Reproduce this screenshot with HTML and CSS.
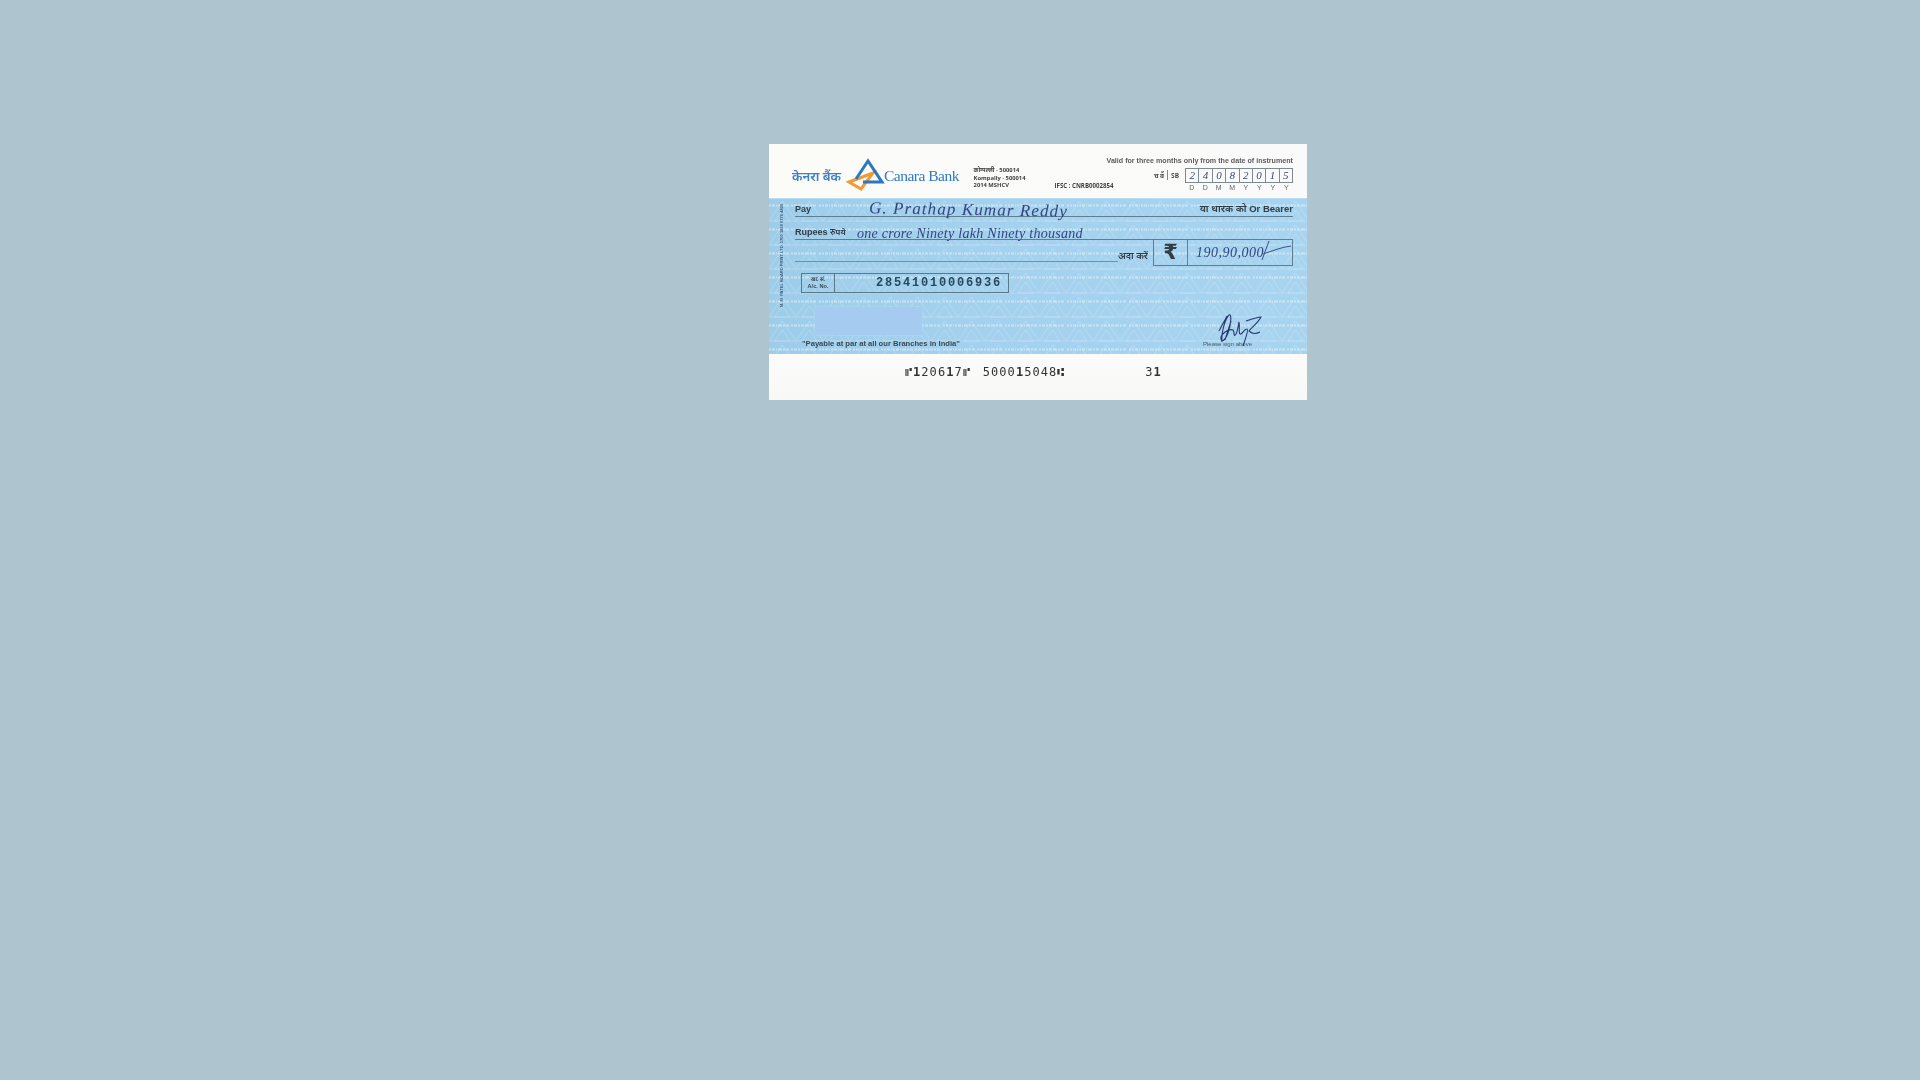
FILE: index.html
```html
<!DOCTYPE html>
<html lang="en">
<head>
<meta charset="utf-8">
<title>Cheque</title>
<link rel="stylesheet" href="styles.css">
</head>
<body>
<main class="cheque">
  <header class="head">
    <div class="brand">
      <span class="brand-hi">केनरा बैंक</span>
      <svg class="logo" viewBox="0 0 40 34" width="40" height="34" aria-hidden="true">
        <path d="M4 24 L28 15 L16 31 Z" fill="none" stroke="#f09a38" stroke-width="3" stroke-linejoin="miter"/>
        <path d="M11 21 L23 3 L37 24 L18 24" fill="none" stroke="#2b78be" stroke-width="3" stroke-linejoin="miter"/>
      </svg>
      <span class="brand-en">Canara Bank</span>
    </div>
    <div class="branch">
      <span>कोम्पल्ली - 500014</span>
      <span>Kompally - 500014</span>
      <span>2014 MSHCV</span>
    </div>
    <div class="ifsc">IFSC : CNRB0002854</div>
    <div class="validity">
      <p class="valid">Valid for three months only from the date of instrument</p>
      <div class="date-row">
        <span class="sb">च बैं <i></i> SB</span>
        <div class="date-col">
          <div class="date-boxes">
            <span>2</span><span>4</span><span>0</span><span>8</span><span>2</span><span>0</span><span>1</span><span>5</span>
          </div>
          <div class="date-labels">
            <span>D</span><span>D</span><span>M</span><span>M</span><span>Y</span><span>Y</span><span>Y</span><span>Y</span>
          </div>
        </div>
      </div>
    </div>
  </header>

  <section class="body">
    <svg class="security" width="538" height="156" aria-hidden="true">
      <defs>
        <pattern id="tri" width="27" height="24" patternUnits="userSpaceOnUse">
          <path d="M0 22 L13.5 2 L27 22 Z M6 22 L13.5 11 L21 22 Z" fill="none" stroke="#ffffff" stroke-opacity=".18" stroke-width="1"/>
        </pattern>
        <pattern id="micro" width="62" height="24" y="5" patternUnits="userSpaceOnUse">
          <path d="M0 1.5 H62" stroke="#ffffff" stroke-opacity=".4" stroke-width="2" stroke-dasharray="2 1 3 1 1 1 4 1 2 1 3 2 2 1 3 1 2 1 3 1 4 1 2 1 3 3 2 1"/>
        </pattern>
      </defs>
      <rect width="538" height="156" fill="url(#tri)"/>
      <rect width="538" height="156" fill="url(#micro)"/>
    </svg>
    <p class="side-print">M. M. PATEL BOARD PRINT LTD. 1700 1850 0776 4820</p>

    <div class="line-row pay-row">
      <span class="label">Pay</span>
      <span class="bearer"><span class="hi">या धारक को</span> Or Bearer</span>
      <span class="hand hand-payee">G. Prathap Kumar Reddy</span>
    </div>
    <div class="line-row rupees-row">
      <span class="label">Rupees <span class="hi">रुपये</span></span>
      <span class="hand hand-words">one crore Ninety lakh Ninety thousand</span>
    </div>
    <div class="amount-row">
      <div class="blank-line"></div>
      <span class="pay-hi">अदा करें</span>
      <div class="amount-box">
        <span class="rupee">₹</span>
        <span class="amount">
          <span class="hand hand-amount">190,90,000</span>
          <svg class="dash" width="32" height="24" viewBox="0 0 32 24" aria-hidden="true">
            <path d="M2 20 L9 1 M3 14 C12 11 22 7 31 6" fill="none" stroke="#2c3f7c" stroke-width=".9"/>
          </svg>
        </span>
      </div>
    </div>
    <div class="account">
      <div class="ac-label"><span>खा. सं.</span><span>A/c. No.</span></div>
      <div class="ac-number">28541010006936</div>
    </div>
    <div class="stamp"></div>
    <div class="foot-row">
      <span class="par">"Payable at par at all our Branches in India"</span>
      <span class="sign">Please sign above</span>
      <svg class="signature" width="46" height="34" viewBox="0 0 46 34" aria-hidden="true">
        <path d="M6 29 C5 20 9 6 13 2 C16 0 15 12 12 20 C10 26 6 30 5 26 C4 22 12 15 17 17 C19 19 17 25 20 21 C22 17 22 13 23 9 C24 14 22 22 25 21 C27 20 28 16 31 16 C33 17 28 30 27 33 M30 8 C36 6 42 4 45 4 C42 10 36 14 33 18 C36 21 40 21 44 19 M3 18 C8 8 10 6 11 3 M9 27 C11 20 14 12 15 8" fill="none" stroke="#28396f" stroke-width="1.1"/>
      </svg>
    </div>
  </section>

  <footer class="micr">
    <span class="m1">⑈<b>1</b>206<b>1</b>7⑈</span>
    <span class="m2">5000<b>1</b>5048⑆</span>
    <span class="m3">3<b>1</b></span>
  </footer>
</main>
</body>
</html>
```
FILE: styles.css
```css
* { box-sizing: border-box; }
html, body { margin: 0; height: 100%; }
body {
  background: #aec5cf;
  font-family: "Liberation Sans", "Noto Sans", sans-serif;
  overflow: hidden;
}
p { margin: 0; }
.hi { font-family: "Noto Sans", "Noto Sans Devanagari", "Lohit Devanagari", sans-serif; }

.cheque {
  width: 538px;
  height: 256px;
  margin: 144px 0 0 769px;
  display: flex;
  flex-direction: column;
  background: #fbfbf9;
  filter: blur(0.55px);
}

/* header */
.head {
  height: 54px;
  position: relative;
  display: flex;
  align-items: flex-start;
  padding: 15px 14px 0 23px;
  background: linear-gradient(90deg, #fbfbf8, #fafafa);
}
.brand { display: flex; align-items: center; width: 184px; margin-top: 1px; }
.brand-hi {
  width: 53px;
  font: 600 13px "Noto Sans", "Noto Sans Devanagari", sans-serif;
  color: #3c82c6;
  white-space: nowrap;
}
.logo { flex: none; margin-top: -2px; }
.brand-en {
  margin-left: -1px;
  font: 400 15.5px "Liberation Serif", serif;
  letter-spacing: -.5px;
  color: #2f7cc0;
  white-space: nowrap;
}
.branch {
  width: 82px;
  margin-top: 8px;
  display: flex;
  flex-direction: column;
  font: 700 5.8px/7.5px "Open Sans", "Noto Sans", sans-serif;
  color: #3f3f3f;
  white-space: nowrap;
}
.ifsc {
  width: 52px;
  margin-top: 23px;
  font: 700 6.1px/8px "Open Sans", "Noto Sans", sans-serif;
  color: #3f3f3f;
  white-space: nowrap;
}
.validity { flex: 1; margin-top: -2px; display: flex; flex-direction: column; align-items: flex-end; }
.valid { font: 700 7.13px/9px "Liberation Sans", sans-serif; color: #5c5c5c; white-space: nowrap; }
.date-row { display: flex; align-items: flex-start; margin-top: 2px; }
.sb {
  display: flex; align-items: center; gap: 3px;
  margin: 2px 6px 0 0;
  font: 700 6.5px/9px "Noto Sans", sans-serif;
  color: #4a4a4a;
}
.sb i { width: 1px; height: 10px; background: #888; }
.date-col { width: 108px; }
.date-boxes {
  height: 15px;
  display: grid;
  grid-template-columns: repeat(8, 1fr);
  border: 1px solid #7d8a90;
  border-left: 0;
}
.date-boxes span {
  border-left: 1px solid #7d8a90;
  text-align: center;
  font: italic 400 11px/13px "Liberation Serif", serif;
  color: #34487e;
}
.date-labels {
  display: grid;
  grid-template-columns: repeat(8, 1fr);
  font: 400 7px/9px "Liberation Sans", sans-serif;
  color: #666;
  text-align: center;
}

/* blue body */
.body {
  height: 156px;
  position: relative;
  isolation: isolate;
  padding: 0 14px 0 26px;
  background: linear-gradient(90deg, #9ecdea 0%, #a4d1ee 45%, #a8d4f0 100%);
  border-top: 1px solid #b8dcf2;
}
.security { position: absolute; left: 0; top: 0; z-index: -1; }
.side-print {
  position: absolute;
  left: 10px;
  top: 6px;
  writing-mode: vertical-rl;
  transform: rotate(180deg);
  height: 102px;
  font: 700 4px/5px "Liberation Sans", sans-serif;
  letter-spacing: .02px;
  color: #3f5a6e;
  white-space: nowrap;
}
.line-row {
  position: relative;
  display: flex;
  align-items: flex-end;
  justify-content: space-between;
  border-bottom: 1px solid #5c7f92;
}
.pay-row { height: 18px; }
.rupees-row { height: 23px; }
.label, .bearer {
  font: 700 9px/12px "Liberation Sans", sans-serif;
  color: #2f3d48;
  white-space: nowrap;
  padding-bottom: 1px;
}
.bearer { font-size: 9.5px; }
.bearer .hi { font-size: 10px; font-weight: 600; }
.label .hi { font-size: 8.5px; font-weight: 600; }
.hand {
  font-family: "Liberation Serif", serif;
  font-style: italic;
  color: #33467f;
  white-space: nowrap;
}
.hand-payee {
  position: absolute;
  left: 74px;
  bottom: -5px;
  font-size: 17px;
  line-height: 22px;
  letter-spacing: 1.1px;
  transform: rotate(1deg);
}
.hand-words {
  position: absolute;
  left: 62px;
  bottom: -4px;
  font-size: 14.1px;
  line-height: 20px;
  letter-spacing: .24px;
}
.amount-row { display: flex; align-items: flex-start; height: 26px; }
.blank-line {
  width: 323px;
  height: 22px;
  border-bottom: 1px solid #6f93a6;
}
.pay-hi {
  width: 35px;
  margin-top: 10px;
  font: 600 9.5px/12px "Noto Sans", "Noto Sans Devanagari", sans-serif;
  color: #2f3d48;
  white-space: nowrap;
}
.amount-box {
  flex: 1;
  height: 26px;
  display: flex;
  border: 1px solid #5c7f92;
  border-top: 0;
}
.rupee {
  width: 34px;
  border-right: 1px solid #5c7f92;
  text-align: center;
  font: 700 21px/24px "DejaVu Sans", sans-serif;
  color: #333d44;
}
.amount { position: relative; flex: 1; padding-left: 8px; }
.hand-amount { font-size: 14px; line-height: 26px; letter-spacing: .5px; }
.dash { position: absolute; right: 0; top: 0; overflow: visible; }
.account {
  width: 208px;
  height: 20px;
  margin: 7px 0 0 6px;
  display: flex;
  border: 1px solid #5a7888;
}
.ac-label {
  width: 33px;
  display: flex;
  flex-direction: column;
  align-items: center;
  justify-content: center;
  border-right: 1px solid #5a7888;
  font: 700 5.6px/7px "Liberation Sans", sans-serif;
  color: #3a4a55;
}
.ac-number {
  flex: 1;
  padding: 0 0 0 41px;
  font: 700 12px/18px "Liberation Mono", monospace;
  letter-spacing: 1.8px;
  color: #26495f;
  white-space: nowrap;
}
.stamp {
  width: 107px;
  height: 28px;
  margin: 14px 0 0 20px;
  background: #a6cbf1;
  box-shadow: 0 0 2px #b8d8f2;
}
.foot-row {
  position: relative;
  display: flex;
  margin: 4px 0 0 7px;
  height: 10px;
}
.par { font: 700 7.6px/10px "Liberation Sans", sans-serif; color: #3a4a55; white-space: nowrap; }
.sign {
  position: absolute;
  left: 401px;
  top: 1px;
  font: 400 6px/9px "Liberation Sans", sans-serif;
  color: #4a5a66;
  white-space: nowrap;
}
.signature { position: absolute; left: 414px; top: -26px; }

/* footer */
.micr {
  flex: 1;
  display: flex;
  align-items: flex-start;
  padding: 11px 0 0 136px;
  background: linear-gradient(180deg, #fbfbfb, #f8f8f6);
  font: 400 12px/14px "DejaVu Sans Mono", "Liberation Mono", monospace;
  color: #333;
  white-space: nowrap;
}
.micr span { letter-spacing: 1.05px; }
.m2 { margin-left: 12px; }
.m3 { margin-left: 80px; }
```
